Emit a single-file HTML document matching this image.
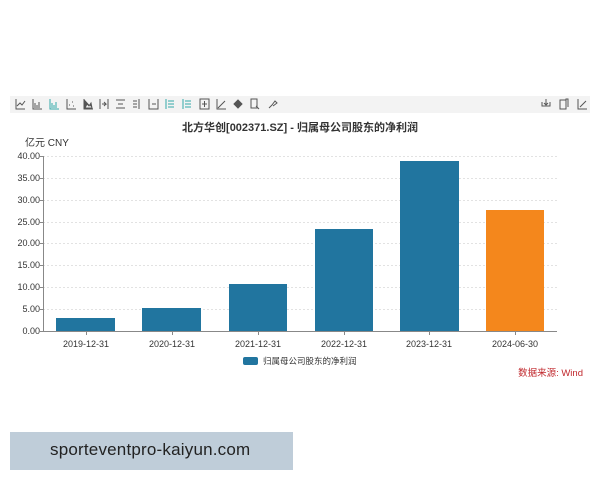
<!DOCTYPE html>
<html><head><meta charset="utf-8"><style>
body{margin:0;width:600px;height:480px;background:#fff;position:relative;overflow:hidden;font-family:"Liberation Sans","Noto Sans CJK SC",sans-serif}
.a{position:absolute}
</style></head><body>
<div class="a" style="left:10px;top:96px;width:580px;height:17px;background:#f3f3f3"></div>
<svg class="a" style="left:0;top:0" width="600" height="480" xmlns="http://www.w3.org/2000/svg">
<g fill="none" stroke="#555" stroke-width="1">
<path d="M16 99v10h9M17 106l3-3 2 2 3-4"/>
<path d="M33 99v10h9M35 108v-5M37 108v-3M39 108v-6"/>
<path d="M50 99v10h9M52 108v-5M54 108v-3M56 108v-6" stroke="#3aa"/>
<path d="M67 99v10h9M69 105h1M72 102h1M73 106h1"/>
<path d="M84 99v10h9M85 108l2-4 2 2 2-3 1 5z" fill="#555"/>
<path d="M100 99v10M108 99v10M102 104h4l-2-2M104 106l2-2"/>
<path d="M116 100h9M116 108h9M118 104h5"/>
<path d="M133 101h4M133 104h4M133 107h4M139 99v10"/>
<path d="M149 99v10h9v-10M152 104h4"/>
<path d="M166 99v10M168 101h6M168 104h6M168 107h6" stroke="#3aa"/>
<path d="M183 99v10M185 101h6M185 104h6M185 107h6" stroke="#3aa"/>
<path d="M200 99h9v10h-9zM204.5 101v6M202 104h5"/>
<path d="M217 99v10h9M218 108l7-7"/>
<path d="M234 104l4-4 4 4-4 4z" fill="#555"/>
<path d="M251 99h6v9h-6zM256 106l3 3"/>
<path d="M269 108l3-3M272 105l3-4 2 2-4 3"/>
<path d="M542 102v4h8v-4M546 99v6M544 103l2 2 2-2"/>
<path d="M560 100h6v9h-6zM566 100v-1h2v8"/>
<path d="M578 99v10h9M580 107l6-6"/>
</g>
<text x="300" y="131" text-anchor="middle" font-size="11" font-weight="bold" fill="#333">北方华创[002371.SZ] - 归属母公司股东的净利润</text>
<text x="25" y="146" font-size="10" fill="#333">亿元  CNY</text>
<g stroke="#e2e2e2" stroke-dasharray="2,2">
<path d="M43 156.5H557M43 178.5H557M43 200.5H557M43 222.5H557M43 243.5H557M43 265.5H557M43 287.5H557M43 309.5H557"/>
</g>
<g fill="#21759f">
<rect x="56" y="318" width="59" height="13"/>
<rect x="142" y="308" width="59" height="23"/>
<rect x="229" y="284" width="58" height="47"/>
<rect x="315" y="229" width="58" height="102"/>
<rect x="400" y="161" width="59" height="170"/>
</g>
<rect x="486" y="210" width="58" height="121" fill="#f4871c"/>
<g stroke="#888"><path d="M43.5 156V331M43 331.5H557M40 156.5h4M40 178.5h4M40 200.5h4M40 222.5h4M40 243.5h4M40 265.5h4M40 287.5h4M40 309.5h4M40 331.5h4"/>
<path d="M86.5 331v4M172.5 331v4M258.5 331v4M344.5 331v4M429.5 331v4M515.5 331v4"/></g>
<g font-size="9" fill="#333" text-anchor="end">
<text x="40" y="159">40.00</text><text x="40" y="181">35.00</text><text x="40" y="203">30.00</text><text x="40" y="225">25.00</text><text x="40" y="246">20.00</text><text x="40" y="268">15.00</text><text x="40" y="290">10.00</text><text x="40" y="312">5.00</text><text x="40" y="334">0.00</text>
</g>
<g font-size="9" fill="#333" text-anchor="middle">
<text x="86" y="347">2019-12-31</text><text x="172" y="347">2020-12-31</text><text x="258" y="347">2021-12-31</text><text x="344" y="347">2022-12-31</text><text x="429" y="347">2023-12-31</text><text x="515" y="347">2024-06-30</text>
</g>
<rect x="243" y="357" width="15" height="8" rx="2" fill="#21759f"/>
<text x="263" y="364" font-size="8.5" fill="#333">归属母公司股东的净利润</text>
<text x="583" y="376" text-anchor="end" font-size="9.5" fill="#c0282d">数据来源: Wind</text>
</svg>
<div class="a" style="left:10px;top:432px;width:283px;height:38px;background:#bfcdd9"></div>
<div class="a" style="left:50px;top:440px;font-size:17px;color:#222;letter-spacing:0.2px">sporteventpro-kaiyun.com</div>
</body></html>
